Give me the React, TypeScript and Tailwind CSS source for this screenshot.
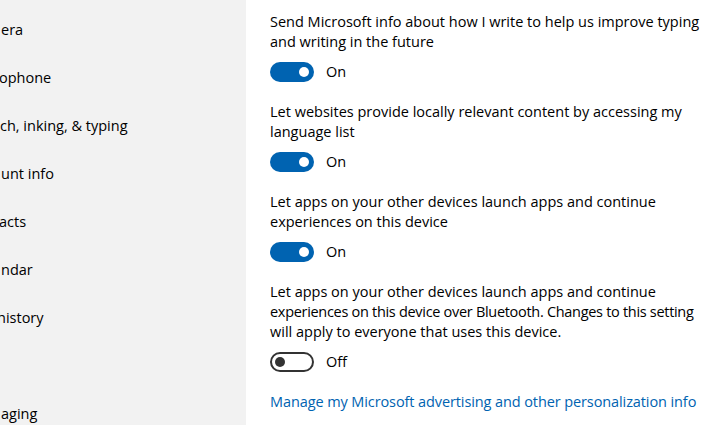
import React from "react";

function Toggle({ on }: { on: boolean }) {
  return (
    <div className="flex h-[20px] items-center">
      {on ? (
        <div className="flex h-[20px] w-[44px] items-center justify-end rounded-full bg-[#0063b1] px-[5px]">
          <div className="h-[10px] w-[10px] rounded-full bg-white" />
        </div>
      ) : (
        <div className="flex h-[20px] w-[44px] items-center justify-start rounded-full border-2 border-[#333333] bg-white px-[3px]">
          <div className="h-[10px] w-[10px] rounded-full bg-[#333333]" />
        </div>
      )}
      <span className="ml-[12px] leading-[20px]">{on ? "On" : "Off"}</span>
    </div>
  );
}

function Setting({ children, on }: { children: React.ReactNode; on: boolean }) {
  return (
    <div className="flex flex-col">
      <p className="whitespace-nowrap leading-[20px]">{children}</p>
      <div className="mt-[10px]">
        <Toggle on={on} />
      </div>
    </div>
  );
}

const navItems: { label: string; cls: string }[] = [
  { label: "era", cls: "ml-[1px]" },
  { label: "ophone", cls: "ml-[-1px]" },
  { label: "ch, inking, & typing", cls: "ml-0" },
  { label: "unt info", cls: "ml-[1px]" },
  { label: "acts", cls: "ml-[-1px]" },
  { label: "ndar", cls: "ml-[1px]" },
  { label: "history", cls: "ml-[-3px]" },
  { label: "", cls: "ml-0" },
  { label: "aging", cls: "ml-[1px]" },
];

export default function App() {
  return (
    <div className="flex h-[425px] w-[711px] overflow-hidden bg-white font-['Open_Sans',sans-serif] text-[14.5px] text-black">
      <aside className="flex w-[246px] shrink-0 flex-col bg-[#f2f2f2] pt-[6px]">
        {navItems.map((item, i) => (
          <div key={i} className="flex h-[48px] shrink-0 items-center overflow-hidden whitespace-nowrap">
            <span className={`leading-[20px] ${item.cls}`}>{item.label}</span>
          </div>
        ))}
      </aside>
      <main className="flex min-w-0 flex-1 flex-col gap-[20px] overflow-hidden pl-[24px] pt-[12px]">
        <Setting on={true}>
          Send Microsoft info about how I write to help us improve typing
          <br />
          and writing in the future
        </Setting>
        <Setting on={true}>
          Let websites provide locally relevant content by accessing my
          <br />
          language list
        </Setting>
        <Setting on={true}>
          Let apps on your other devices launch apps and continue
          <br />
          experiences on this device
        </Setting>
        <Setting on={false}>
          Let apps on your other devices launch apps and continue
          <br />
          <span className="tracking-[-0.3px]">
            experiences on this device over Bluetooth. Changes to this setting
          </span>
          <br />
          will apply to everyone that uses this device.
        </Setting>
        <a className="whitespace-nowrap leading-[20px] tracking-[-0.1px] text-[#0063b1]" href="#">
          Manage my Microsoft advertising and other personalization info
        </a>
      </main>
    </div>
  );
}
